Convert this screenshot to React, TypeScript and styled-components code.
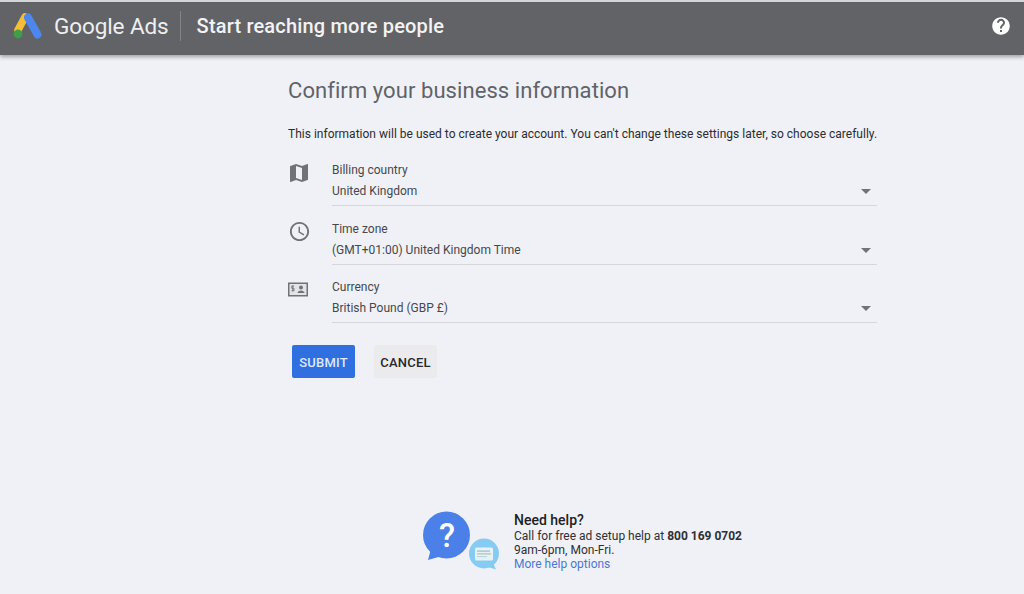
import styled, { createGlobalStyle } from "styled-components";

const GlobalStyle = createGlobalStyle`
  html, body {
    margin: 0;
    padding: 0;
    background: #f0f1f6;
    font-family: Roboto, "Liberation Sans", sans-serif;
  }
`;

const Page = styled.div`
  width: 1024px;
  height: 594px;
  overflow: hidden;
  display: flex;
  flex-direction: column;
  background: #f0f1f6;
  border-top: 2px solid #d4d5d8;
  box-sizing: border-box;
`;

const Header = styled.header`
  flex: none;
  height: 53px;
  box-sizing: border-box;
  display: flex;
  align-items: center;
  padding: 0 13px 5px;
  background: #626367;
  box-shadow: 0 2px 4px rgba(60, 64, 67, 0.45);
  color: #fff;
`;

const Brand = styled.span`
  margin-left: 12px;
  font-size: 22.5px;
  letter-spacing: -0.1px;
  color: #eeeff0;
`;

const Divider = styled.span`
  width: 1px;
  height: 30px;
  margin: 0 16px 0 11px;
  background: #84858a;
`;

const Title = styled.h1`
  flex: 1;
  margin: 0;
  font-size: 20px;
  font-weight: 500;
  letter-spacing: 0.18px;
  color: #f3f3f4;
`;

const Main = styled.main`
  flex: 1;
  width: 589px;
  margin-left: 288px;
  display: flex;
  flex-direction: column;
`;

const Heading = styled.h2`
  margin: 23px 0 0;
  font-size: 22px;
  line-height: 26px;
  font-weight: 400;
  letter-spacing: 0.07px;
  color: #5f6368;
`;

const Intro = styled.p`
  margin: 22px 0 0;
  font-size: 12px;
  line-height: 16px;
  letter-spacing: 0.01px;
  color: #2b2c2f;
  white-space: nowrap;
`;

const Fields = styled.div`
  margin-top: 19px;
  display: flex;
  flex-direction: column;
  gap: 13.5px;
`;

const FieldRow = styled.div`
  display: flex;
  align-items: flex-start;
`;

const IconSlot = styled.div`
  flex: none;
  width: 44px;
  height: 24px;
  display: flex;
  color: #707276;
`;

const Field = styled.div`
  flex: 1;
  height: 43px;
  padding-top: 1px;
  position: relative;
  border-bottom: 1px solid #d5d7da;
  color: #46484c;
`;

const FieldLabel = styled.div`
  font-size: 12px;
  line-height: 16px;
`;

const FieldValue = styled.div`
  margin-top: 5px;
  font-size: 12px;
  line-height: 16px;
`;

const Caret = styled.span`
  position: absolute;
  right: 6px;
  top: 28px;
  width: 0;
  height: 0;
  border-left: 5px solid transparent;
  border-right: 5px solid transparent;
  border-top: 5px solid #707276;
`;

const Actions = styled.div`
  margin: 22px 0 0 4px;
  display: flex;
  gap: 19px;
`;

const Button = styled.button<{ $primary?: boolean }>`
  width: 63px;
  height: 33px;
  padding: 1px 0 0;
  border: none;
  border-radius: 2px;
  font-family: inherit;
  font-size: 13px;
  font-weight: 500;
  letter-spacing: 0.2px;
  background: ${(p) => (p.$primary ? "#2f6fe0" : "#ebebee")};
  color: ${(p) => (p.$primary ? "#dfe9fb" : "#27282b")};
`;

const Help = styled.section`
  margin: 131px 0 0 134px;
  display: flex;
  align-items: flex-start;
`;

const HelpArt = styled.svg`
  flex: none;
  width: 78px;
  height: 62px;
`;

const HelpText = styled.div`
  margin: 3px 0 0 14px;
  font-size: 12px;
  line-height: 14px;
  color: #2f3033;
  white-space: nowrap;
`;

const HelpTitle = styled.div`
  font-size: 14px;
  line-height: 17px;
  font-weight: 500;
  color: #202124;
`;

const HelpLink = styled.a`
  color: #4a78d4;
  text-decoration: none;
`;

function AdsLogo() {
  return (
    <svg width="29" height="26" viewBox="0 0 29 26">
      <path d="M12 4 L5 17" stroke="#f6bd36" strokeWidth="7.5" strokeLinecap="round" />
      <path d="M15 4.5 L24.5 21.5" stroke="#4d86ec" strokeWidth="8" strokeLinecap="round" />
      <circle cx="5" cy="21" r="4.4" fill="#3f9f48" />
    </svg>
  );
}

function MapIcon() {
  return (
    <svg width="24" height="24" viewBox="0 0 24 24" fill="currentColor" style={{ marginLeft: -1 }}>
      <path d="M20.5 3l-.16.03L15 5.1 9 3 3.36 4.9c-.21.07-.36.25-.36.48V20.5c0 .28.22.5.5.5l.16-.03L9 18.9l6 2.1 5.64-1.9c.21-.07.36-.25.36-.48V3.5c0-.28-.22-.5-.5-.5zM15 19l-6-2.11V5l6 2.11V19z" />
    </svg>
  );
}

function ClockIcon() {
  return (
    <svg width="23" height="23" viewBox="0 0 24 24" fill="currentColor">
      <path d="M11.99 2C6.47 2 2 6.48 2 12s4.47 10 9.99 10C17.52 22 22 17.52 22 12S17.52 2 11.99 2zM12 20c-4.42 0-8-3.58-8-8s3.58-8 8-8 8 3.58 8 8-3.58 8-8 8z" />
      <path d="M12.5 7H11v6l5.25 3.15.75-1.23-4.5-2.67z" />
    </svg>
  );
}

function CurrencyIcon() {
  return (
    <svg width="20" height="15" viewBox="0 0 20 14" style={{ marginTop: 4 }}>
      <rect x="0.75" y="0.75" width="18.5" height="12.5" fill="#e3e4e7" stroke="currentColor" strokeWidth="1.5" />
      <circle cx="13" cy="5" r="2" fill="currentColor" />
      <path d="M9.5 10.5c0-1.8 2-2.6 3.5-2.6s3.5.8 3.5 2.6z" fill="currentColor" />
      <path d="M6 3.6H3.8v2.2H6v2.4H3.6M4.8 2.8v6.2" fill="none" stroke="currentColor" strokeWidth="0.9" />
    </svg>
  );
}

function HelpBubbles() {
  return (
    <HelpArt viewBox="0 0 78 62">
      <circle cx="24.5" cy="26" r="23.5" fill="#4a80e8" />
      <path d="M9 40 L6 51 L20 47 z" fill="#4a80e8" />
      <text x="25" y="38" textAnchor="middle" fontFamily="Roboto, sans-serif" fontSize="33" fontWeight="500" fill="#fff">?</text>
      <circle cx="62" cy="44.5" r="15" fill="#86ccf2" />
      <path d="M66 58 L74 60.5 L71 54 z" fill="#86ccf2" />
      <rect x="53" y="38.5" width="18" height="13" rx="1.5" fill="#e6f3f6" />
      <rect x="55" y="41.5" width="13" height="1.2" fill="#9fb6d2" />
      <rect x="55" y="44.3" width="14" height="1.2" fill="#a5c8a8" />
      <rect x="55" y="47" width="10" height="1.2" fill="#c3d3dc" />
    </HelpArt>
  );
}

function HelpCircle() {
  return (
    <svg width="20" height="20" viewBox="0 0 24 24" fill="#fff">
      <path d="M12 1.5C6.2 1.5 1.5 6.2 1.5 12S6.2 22.5 12 22.5 22.5 17.8 22.5 12 17.8 1.5 12 1.5zm1.2 17.6h-2.4v-2.4h2.4v2.4zm2.4-8.1l-1.1 1.1c-.9.9-1.3 1.6-1.3 3h-2.4v-.6c0-1.3.5-2.5 1.4-3.4l1.5-1.5c.4-.4.7-1 .7-1.6 0-1.3-1.1-2.4-2.4-2.4S9.6 6.7 9.6 8H7.2c0-2.7 2.1-4.8 4.8-4.8s4.8 2.1 4.8 4.8c0 1.1-.4 2.1-1.2 3z" fill="#fff" fillRule="evenodd" />
    </svg>
  );
}

const fields = [
  { label: "Billing country", value: "United Kingdom", icon: <MapIcon /> },
  { label: "Time zone", value: "(GMT+01:00) United Kingdom Time", icon: <ClockIcon /> },
  { label: "Currency", value: "British Pound (GBP £)", icon: <CurrencyIcon /> },
];

export default function App() {
  return (
    <Page>
      <GlobalStyle />
      <Header>
        <AdsLogo />
        <Brand>Google Ads</Brand>
        <Divider />
        <Title>Start reaching more people</Title>
        <HelpCircle />
      </Header>
      <Main>
        <Heading>Confirm your business information</Heading>
        <Intro>This information will be used to create your account. You can't change these settings later, so choose carefully.</Intro>
        <Fields>
          {fields.map((f) => (
            <FieldRow key={f.label}>
              <IconSlot>{f.icon}</IconSlot>
              <Field>
                <FieldLabel>{f.label}</FieldLabel>
                <FieldValue>{f.value}</FieldValue>
                <Caret />
              </Field>
            </FieldRow>
          ))}
        </Fields>
        <Actions>
          <Button $primary>SUBMIT</Button>
          <Button>CANCEL</Button>
        </Actions>
        <Help>
          <HelpBubbles />
          <HelpText>
            <HelpTitle>Need help?</HelpTitle>
            <div>Call for free ad setup help at <b>800 169 0702</b></div>
            <div>9am-6pm, Mon-Fri.</div>
            <HelpLink href="#">More help options</HelpLink>
          </HelpText>
        </Help>
      </Main>
    </Page>
  );
}
